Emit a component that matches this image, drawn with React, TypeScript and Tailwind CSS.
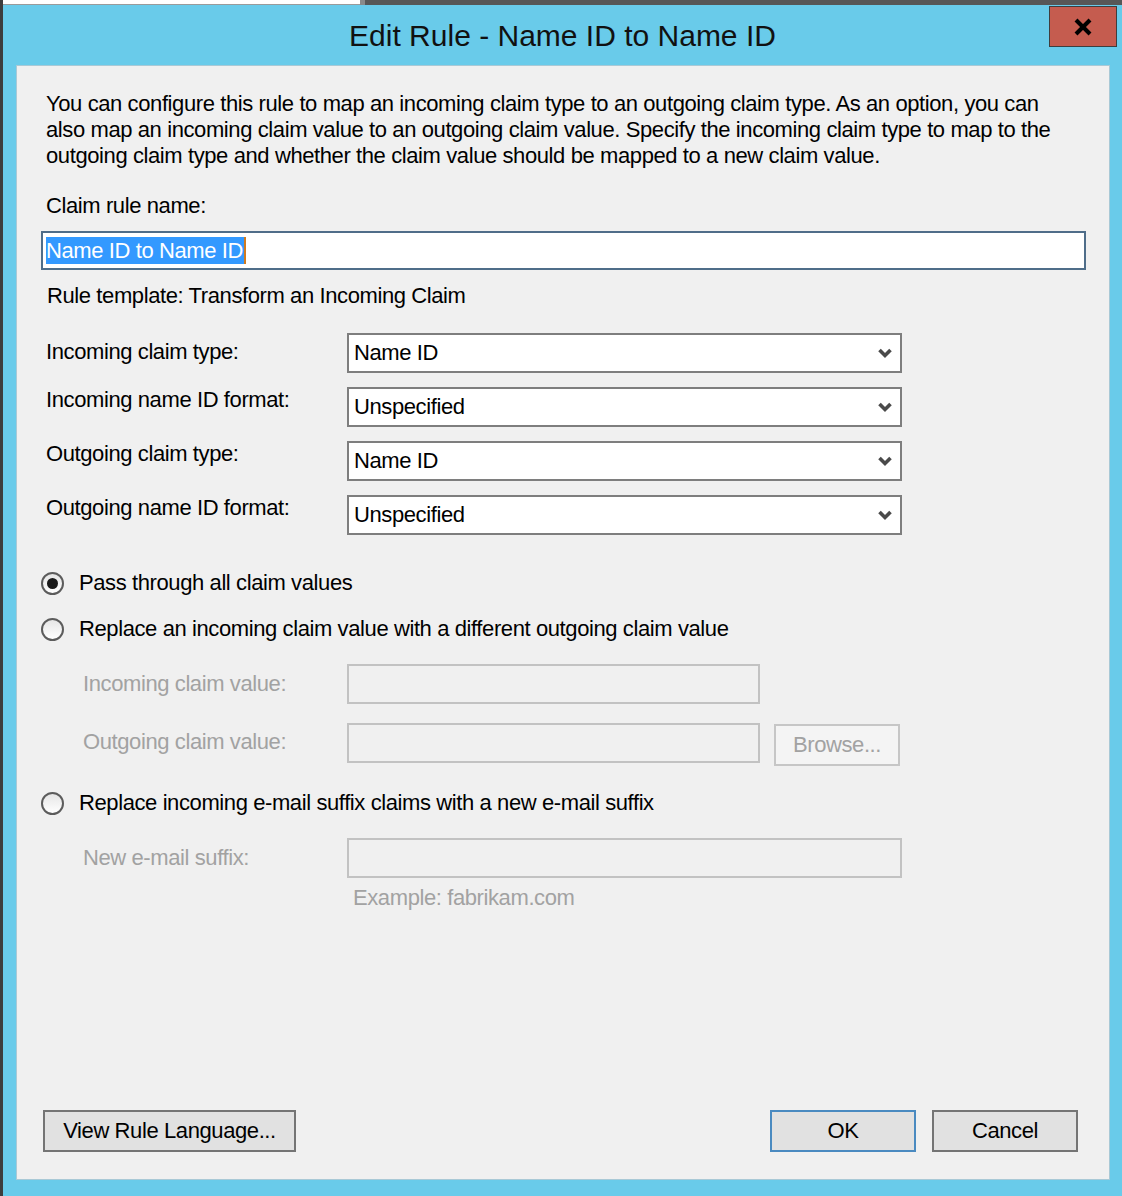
import type { ReactNode } from "react";

const FONT = { fontFamily: '"Liberation Sans", Arial, sans-serif' };

function Chevron() {
  return (
    <svg width="16" height="12" viewBox="0 0 16 12" fill="none" stroke="#4a4a4a" strokeWidth="3.6" strokeLinecap="butt" strokeLinejoin="miter">
      <polyline points="2.5,3 8,8.5 13.5,3" />
    </svg>
  );
}

function Select({ value }: { value: string }) {
  return (
    <div className="w-[555px] h-[40px] bg-white border-2 border-[#7e7e7e] flex items-center justify-between pl-[5px] pr-[7px] text-black">
      <span>{value}</span>
      <Chevron />
    </div>
  );
}

function Radio({ checked, children }: { checked?: boolean; children: ReactNode }) {
  return (
    <div className="flex items-center h-[26px] -ml-[5px]">
      <div className="w-[23px] h-[23px] rounded-full border-2 border-[#5c5c5c] bg-gradient-to-b from-[#e6e6e6] to-white flex items-center justify-center">
        {checked && <div className="w-[11px] h-[11px] rounded-full bg-[#1a1a1a]" />}
      </div>
      <span className="ml-[15px] text-black leading-[26px]">{children}</span>
    </div>
  );
}

function Button({ children, width, primary }: { children: ReactNode; width: string; primary?: boolean }) {
  return (
    <div
      className={`${width} h-[42px] bg-[#e1e1e1] border-2 ${primary ? "border-[#4a8ac0]" : "border-[#747474]"} flex items-center justify-center text-black`}
    >
      {children}
    </div>
  );
}

export default function App() {
  return (
    <div
      className="w-[1122px] h-[1196px] bg-[#69cbea] flex flex-col border-l-[3px] border-[#3d3d3d] text-[22px] leading-[26px] tracking-[-0.4px]"
      style={FONT}
    >
      {/* top edge of the window behind */}
      <div className="h-[5px] flex">
        <div className="w-[357px] bg-white border-b border-[#9a9a9a]" />
        <div className="w-[5px] bg-[#8a8a8a]" />
        <div className="flex-1 bg-[#575757]" />
      </div>

      {/* Title bar */}
      <div className="relative h-[60px] flex items-center justify-center">
        <span className="text-[30px] leading-[34px] tracking-normal text-[#111] mt-[2px]">Edit Rule - Name ID to Name ID</span>
        <div className="absolute top-[1px] right-[5px] w-[68px] h-[41px] bg-[#c55c4f] border border-[#3e3e3e] flex items-center justify-center">
          <svg width="20" height="18" viewBox="0 0 20 18" stroke="#000" strokeWidth="4" strokeLinecap="butt">
            <line x1="3" y1="2" x2="17" y2="16" />
            <line x1="17" y1="2" x2="3" y2="16" />
          </svg>
        </div>
      </div>

      {/* Content panel */}
      <div className="ml-[13px] mr-[12px] mb-[16px] flex-1 bg-[#f0f0f0] border border-[#a9c9d6] flex flex-col pl-[29px] pr-[31px] pt-[25px] pb-[27px] text-black">
        <p className="whitespace-nowrap">
          You can configure this rule to map an incoming claim type to an outgoing claim type. As an option, you can
          <br />
          also map an incoming claim value to an outgoing claim value. Specify the incoming claim type to map to the
          <br />
          outgoing claim type and whether the claim value should be mapped to a new claim value.
        </p>

        <div className="mt-[24px]">Claim rule name:</div>
        <div className="mt-[12px] -ml-[5px] w-[1045px] h-[39px] bg-white border-2 border-[#4f6d89] flex items-center pl-[3px]">
          <span className="bg-[#3399ff] text-white leading-[27px] pr-[1px] border-r-2 border-[#d07a20]">Name ID to Name ID</span>
        </div>

        <div className="mt-[13px] ml-[1px]">Rule template: Transform an Incoming Claim</div>

        <div className="mt-[24px] flex flex-col gap-[14px]">
          {[
            ["Incoming claim type:", "Name ID", "pt-[6px]"],
            ["Incoming name ID format:", "Unspecified", "pt-0"],
            ["Outgoing claim type:", "Name ID", "pt-0"],
            ["Outgoing name ID format:", "Unspecified", "pt-0"],
          ].map(([label, value, pad]) => (
            <div key={label} className="flex items-start">
              <div className={`w-[301px] ${pad}`}>{label}</div>
              <Select value={value} />
            </div>
          ))}
        </div>

        <div className="mt-[35px]">
          <Radio checked>Pass through all claim values</Radio>
        </div>
        <div className="mt-[20px]">
          <Radio>Replace an incoming claim value with a different outgoing claim value</Radio>
        </div>

        <div className="mt-[22px] flex items-center">
          <div className="w-[301px] pl-[37px] text-[#a2a2a2]">Incoming claim value:</div>
          <div className="w-[413px] h-[40px] border-2 border-[#c2c2c2] bg-[#f0f0f0]" />
        </div>
        <div className="mt-[19px] flex items-start">
          <div className="w-[301px] pl-[37px] pt-[6px] text-[#a2a2a2]">Outgoing claim value:</div>
          <div className="w-[413px] h-[40px] border-2 border-[#c2c2c2] bg-[#f0f0f0]" />
          <div className="ml-[14px] mt-[1px] w-[126px] h-[42px] border-2 border-[#c6c6c6] bg-[#f4f4f4] flex items-center justify-center text-[#a2a2a2]">
            Browse...
          </div>
        </div>

        <div className="mt-[24px]">
          <Radio>Replace incoming e-mail suffix claims with a new e-mail suffix</Radio>
        </div>
        <div className="mt-[22px] flex items-center">
          <div className="w-[301px] pl-[37px] text-[#a2a2a2]">New e-mail suffix:</div>
          <div className="w-[555px] h-[40px] border-2 border-[#c2c2c2] bg-[#f0f0f0]" />
        </div>
        <div className="mt-[7px] ml-[307px] text-[#a2a2a2]">Example: fabrikam.com</div>

        <div className="mt-auto flex items-center -ml-[3px]">
          <Button width="w-[253px]">View Rule Language...</Button>
          <div className="flex-1" />
          <Button width="w-[146px]" primary>OK</Button>
          <div className="w-[16px]" />
          <Button width="w-[146px]">Cancel</Button>
        </div>
      </div>
    </div>
  );
}
